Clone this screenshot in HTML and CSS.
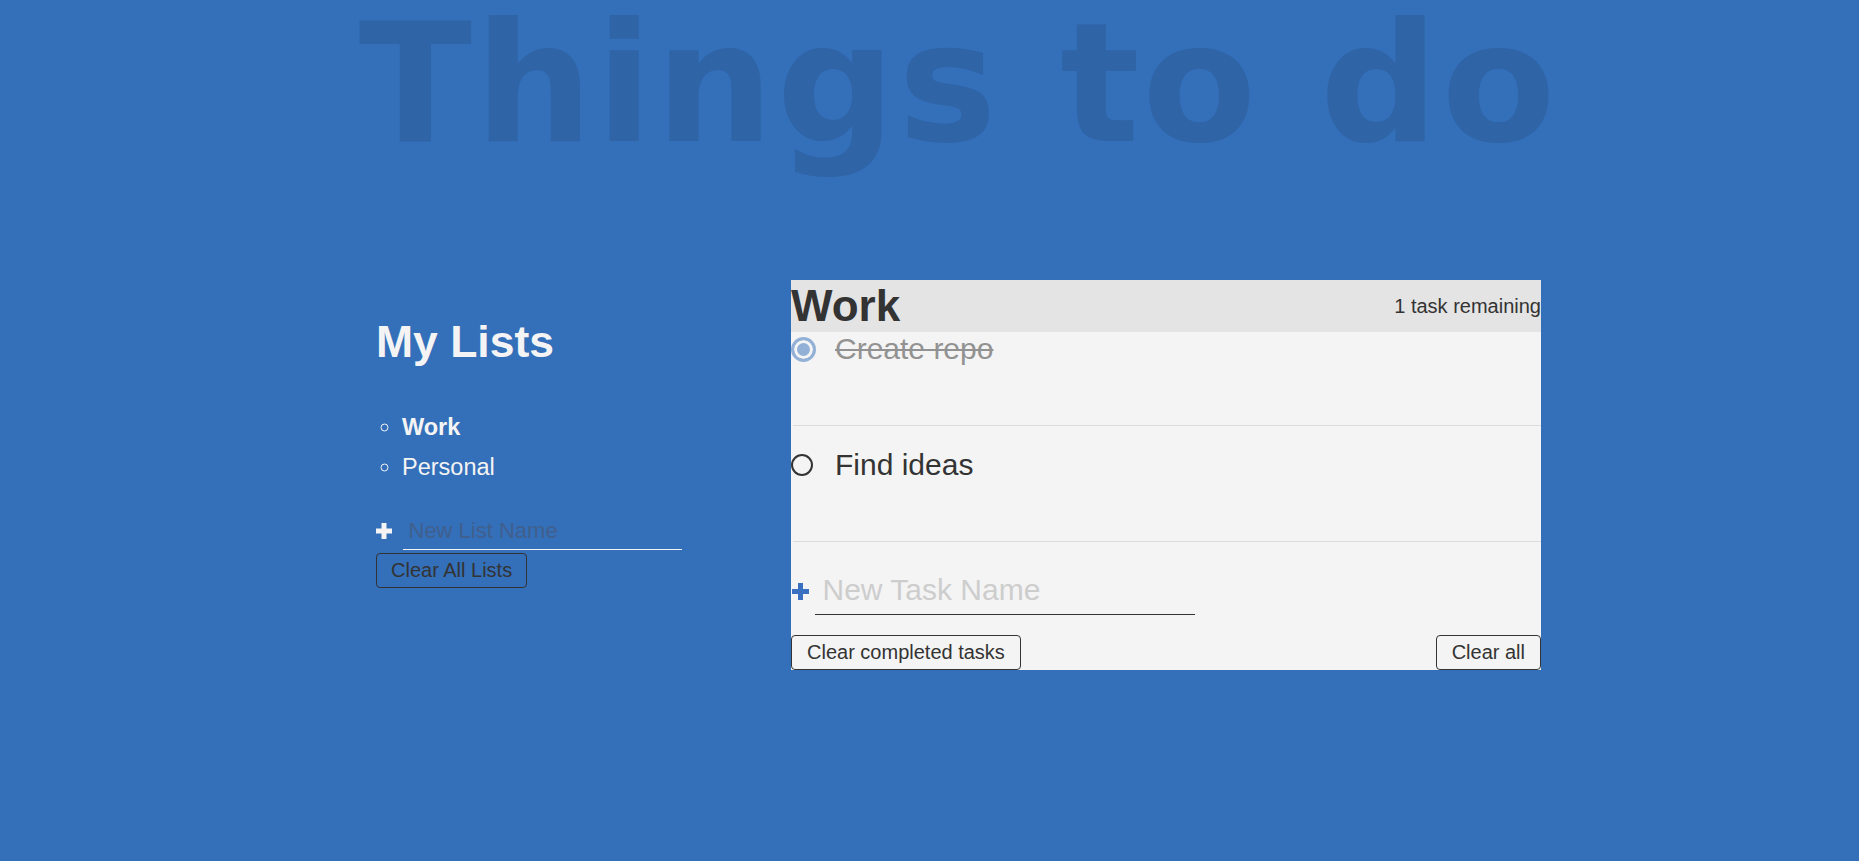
FILE: index.html
```html
<!DOCTYPE html>
<html lang="en">
<head>
<meta charset="utf-8">
<title>Things to do</title>
<link rel="stylesheet" href="styles.css">
</head>
<body>
<h1 class="title">Things to do</h1>

<div class="all-tasks">
  <h2 class="task-list-title">My Lists</h2>
  <ul class="task-list">
    <li class="list-name active-list">Work</li>
    <li class="list-name">Personal</li>
  </ul>
  <form class="new-list-form" action="">
    <button type="button" class="btn create create-list" aria-label="create new list">
      <svg width="16" height="16" viewBox="0 0 16 16"><path d="M5.5 0h5v5.5H16v5h-5.5V16h-5v-5.5H0v-5h5.5z" fill="currentColor"/></svg>
    </button>
    <input type="text" class="new list" placeholder="New List Name" aria-label="new list name">
  </form>
  <div class="delete-list">
    <button type="button" class="outline-btn">Clear All Lists</button>
  </div>
</div>

<div class="todo-list">
  <div class="todo-header">
    <h2 class="list-title">Work</h2>
    <p class="task-count">1 task remaining</p>
  </div>
  <div class="todo-body">
    <div class="tasks">
      <div class="task">
        <label class="task-label done">
          <span class="check-slot"><span class="circle checked"></span></span>
          <span class="task-text">Create repo</span>
        </label>
      </div>
      <div class="task">
        <label class="task-label">
          <span class="check-slot"><span class="circle"></span></span>
          <span class="task-text">Find ideas</span>
        </label>
      </div>
    </div>
    <form class="new-task-form" action="">
      <button type="button" class="btn create create-task" aria-label="create new task">
        <svg width="17" height="17" viewBox="0 0 17 17"><path d="M6 0h5v6h6v5h-6v6H6v-6H0V6h6z" fill="currentColor"/></svg>
      </button>
      <input type="text" class="new task-input" placeholder="New Task Name" aria-label="new task name">
    </form>
    <div class="delete-stuff">
      <button type="button" class="outline-btn">Clear completed tasks</button>
      <button type="button" class="outline-btn">Clear all</button>
    </div>
  </div>
</div>
</body>
</html>
```

FILE: styles.css
```css
html {
  background: #346fb9;
}

body {
  margin: 0;
  padding-left: 58px;
  min-height: 100vh;
  background: #346fb9;
  color: #f4f4f4;
  font-family: "Liberation Sans", Arial, sans-serif;
  display: grid;
  grid-template-columns: 1fr 415px 750px 1fr;
  grid-template-rows: auto auto 1fr;
  grid-template-areas:
    "header header header header"
    ". lists active .";
  align-items: start;
}

.title {
  grid-area: header;
  text-align: center;
  font-family: "DejaVu Sans", "Liberation Sans", sans-serif;
  font-weight: 700;
  font-size: 166px;
  line-height: 200px;
  letter-spacing: 2.8px;
  color: rgb(47, 100, 167);
  margin: -16px 0 96px;
  white-space: nowrap;
}

/* left column */
.all-tasks {
  grid-area: lists;
}

.task-list-title {
  font-size: 44.5px;
  font-weight: 700;
  line-height: 51px;
  margin: 36px 0 40px;
}

.task-list {
  margin: 0 0 25px;
  padding-left: 26px;
  list-style: circle;
  font-size: 23.5px;
  line-height: 40px;
}

.active-list {
  font-weight: 700;
}

.btn {
  background: none;
  border: 0;
  padding: 0;
  color: inherit;
  cursor: pointer;
  display: flex;
}

.new-list-form {
  display: flex;
  align-items: center;
  margin: 0;
}

.create-list {
  width: 16px;
  height: 16px;
  margin-right: 11px;
  color: #f4f4f4;
}

.new {
  background: transparent;
  border: 0;
  border-bottom: 1px solid currentColor;
  outline: none;
  font-family: inherit;
  color: inherit;
  box-sizing: border-box;
  border-radius: 0;
}

.new.list {
  font-size: 22px;
  padding: 5.5px;
  width: 279px;
  color: #f4f4f4;
}

.new.list::placeholder {
  color: #405f8d;
  opacity: 1;
}

.delete-list {
  margin-top: 3px;
  display: flex;
}

.outline-btn {
  font-family: inherit;
  font-size: 20px;
  line-height: 22px;
  padding: 5px 15px 6px;
  border: 1px solid #333;
  border-radius: 4px;
  background: transparent;
  color: #333;
  cursor: pointer;
}

.delete-list .outline-btn {
  padding: 5px 14px 6px;
}

/* right card */
.todo-list {
  grid-area: active;
  background: #f4f4f4;
  color: #333;
}

.todo-header {
  display: flex;
  justify-content: space-between;
  align-items: center;
  background: #e4e4e4;
}

.list-title {
  margin: 0;
  font-size: 44px;
  font-weight: 700;
  line-height: 52px;
}

.task-count {
  margin: 0;
  font-size: 20px;
}

.task-label {
  display: flex;
  align-items: center;
  font-size: 30px;
  line-height: 34px;
  padding-bottom: 59px;
  cursor: pointer;
}

.task + .task .task-label {
  padding-top: 22px;
}

.task::after {
  content: "";
  display: block;
  height: 1px;
  margin-left: 2px;
  background: #dcdcdc;
}

.check-slot {
  width: 26px;
  flex: none;
  margin-right: 18px;
  display: flex;
  align-items: center;
}

.circle {
  width: 22px;
  height: 22px;
  box-sizing: border-box;
  border: 2px solid #333;
  border-radius: 50%;
}

.circle.checked {
  width: 25px;
  height: 25px;
  border: 3px solid #346fb9;
  background: #346fb9;
  box-shadow: inset 0 0 0 3px #f4f4f4;
}

.done {
  opacity: 0.5;
}

.done .task-text {
  text-decoration: line-through;
  text-decoration-thickness: 2px;
}

.new-task-form {
  display: flex;
  align-items: flex-end;
  margin: 23px 0 0;
}

.create-task {
  width: 17px;
  height: 17px;
  margin: 0 6px 15px 1px;
  color: #3a6fc2;
}

.new.task-input {
  font-size: 30px;
  padding: 7.5px;
  width: 380px;
  color: #333;
}

.new.task-input::placeholder {
  color: #cdcdcd;
  opacity: 1;
}

.delete-stuff {
  display: flex;
  justify-content: space-between;
  margin-top: 20px;
}
```
